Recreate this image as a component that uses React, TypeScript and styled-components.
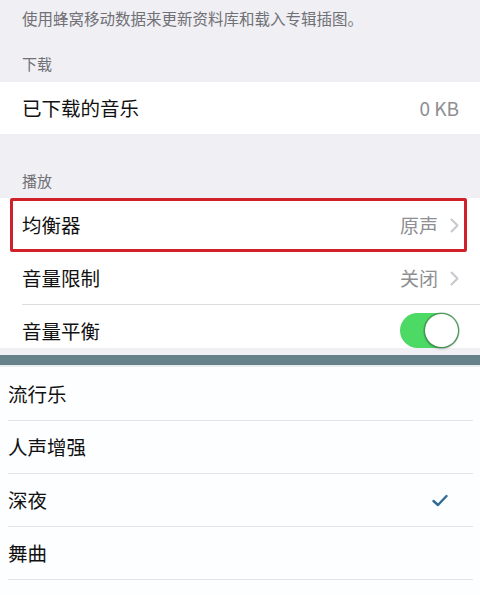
import React from 'react'
import styled, { createGlobalStyle } from 'styled-components'

const GlobalStyle = createGlobalStyle`
  html, body {
    margin: 0;
    padding: 0;
    background: #efeff4;
  }
  * {
    box-sizing: border-box;
  }
`;

const Page = styled.div`
  width: 480px;
  height: 595px;
  overflow: hidden;
  background: #efeff4;
  font-family: 'Noto Sans CJK SC', 'Noto Sans', sans-serif;
`;

const Note = styled.p`
  margin: 0;
  padding: 8px 22px 0;
  font-size: 15.5px;
  line-height: 20px;
  color: #707075;
`;

const SectionHeader = styled.div<{ $top: number }>`
  margin-top: ${p => p.$top}px;
  padding: 0 22px;
  font-size: 15px;
  line-height: 20px;
  color: #707075;
`;

const Group = styled.div<{ $top: number }>`
  margin-top: ${p => p.$top}px;
  background: #ffffff;
`;

const Row = styled.div<{ $height: number; $padTop?: number; $highlight?: boolean }>`
  position: relative;
  height: ${p => p.$height}px;
  padding: ${p => p.$padTop ?? 0}px 21px 0 22px;
  display: flex;
  align-items: center;
  justify-content: space-between;

  ${p => p.$highlight && `
    &::after {
      content: '';
      position: absolute;
      left: 10px;
      right: 13px;
      top: 0;
      bottom: 0;
      border: 3px solid #d0212b;
      border-radius: 2px;
      pointer-events: none;
    }
  `}
`;

const Separator = styled.div<{ $inset: number }>`
  height: 1px;
  margin-left: ${p => p.$inset}px;
  background: #dcdce0;
`;

const Label = styled.span`
  font-size: 19.5px;
  line-height: 26px;
  color: #111111;
`;

const Detail = styled.span`
  display: flex;
  align-items: center;
  gap: 12px;
  font-size: 19px;
  line-height: 26px;
  color: #8e8e93;
`;

const Toggle = styled.div<{ $on: boolean }>`
  position: relative;
  width: 59px;
  height: 35px;
  border-radius: 18px;
  background: ${p => (p.$on ? '#4cd964' : '#e5e5ea')};

  &::after {
    content: '';
    position: absolute;
    top: 1px;
    ${p => (p.$on ? 'right: 1px;' : 'left: 1px;')}
    width: 33px;
    height: 33px;
    border-radius: 50%;
    background: #ffffff;
    box-shadow: 0 0 0 1.5px rgba(60, 110, 70, 0.55), 0 2px 3px rgba(0, 0, 0, 0.2);
  }
`;

const Band = styled.div`
  margin-top: 7px;
  height: 12px;
  background: #67818b;
  border-bottom: 2px solid #e9edf0;
`;

const List = styled.div`
  min-height: 240px;
  background: #fdfeff;
  padding: 0 7px 0 8px;
`;

const ListRow = styled.div<{ $height: number }>`
  height: ${p => p.$height}px;
  display: flex;
  align-items: center;
  justify-content: space-between;
  padding-right: 25px;
  border-bottom: 1px solid #e1e3e6;
`;

const Chevron = () => (
  <svg width="9" height="15" viewBox="0 0 9 15">
    <polyline points="1.5,1.5 7.5,7.5 1.5,13.5" fill="none" stroke="#c7c7cc" strokeWidth="2" strokeLinecap="round" strokeLinejoin="round" />
  </svg>
);

const Check = () => (
  <svg width="16" height="13" viewBox="0 0 16 13">
    <polyline points="1.5,7 6,11 14.5,2" fill="none" stroke="#2f6b94" strokeWidth="2.4" strokeLinecap="round" strokeLinejoin="round" />
  </svg>
);

const presets = [
  { name: '流行乐', height: 54 },
  { name: '人声增强', height: 53 },
  { name: '深夜', height: 53, checked: true },
  { name: '舞曲', height: 53 },
  { name: '', height: 53 },
];

export default function App() {
  return (
    <>
      <GlobalStyle />
      <Page>
        <Note>使用蜂窝移动数据来更新资料库和载入专辑插图。</Note>

        <SectionHeader $top={26}>下载</SectionHeader>
        <Group $top={8}>
          <Row $height={52}>
            <Label>已下载的音乐</Label>
            <Detail>0 KB</Detail>
          </Row>
        </Group>

        <SectionHeader $top={37}>播放</SectionHeader>
        <Group $top={7}>
          <Row $height={54} $highlight>
            <Label>均衡器</Label>
            <Detail>原声<Chevron /></Detail>
          </Row>
          <Row $height={52}>
            <Label>音量限制</Label>
            <Detail>关闭<Chevron /></Detail>
          </Row>
          <Separator $inset={22} />
          <Row $height={43} $padTop={8}>
            <Label>音量平衡</Label>
            <Toggle $on />
          </Row>
        </Group>

        <Band />

        <List>
          {presets.map((p, i) => (
            <ListRow key={i} $height={p.height}>
              <Label>{p.name}</Label>
              {p.checked && <Check />}
            </ListRow>
          ))}
        </List>
      </Page>
    </>
  )
}
